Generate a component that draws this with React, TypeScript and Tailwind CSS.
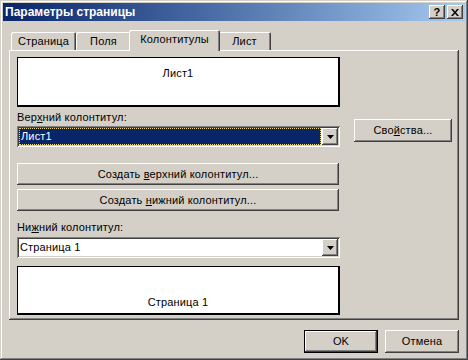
import type { ReactNode } from 'react';

const raised =
  'shadow-[inset_-1px_-1px_#404040,inset_1px_1px_#ffffff,inset_-2px_-2px_#808080,inset_2px_2px_#d4d0c8]';
const sunken =
  'shadow-[inset_1px_1px_#808080,inset_-1px_-1px_#ffffff,inset_2px_2px_#404040,inset_-2px_-2px_#d4d0c8]';

function Button({ children, className = '' }: { children: ReactNode; className?: string }) {
  return (
    <div className={`flex items-center justify-center bg-[#d4d0c8] text-black ${raised} ${className}`}>
      {children}
    </div>
  );
}

function Arrow() {
  return (
    <svg width="7" height="4" viewBox="0 0 7 4">
      <polygon points="0,0 7,0 3.5,4" fill="#000" />
    </svg>
  );
}

function Combo({ text, selected }: { text: string; selected?: boolean }) {
  return (
    <div className={`flex h-[21px] w-[323px] bg-white p-[2px] ${sunken}`}>
      <div className="flex flex-1 items-center pr-[1px]">
        {selected ? (
          <div className="flex h-full w-full items-center border border-dotted border-[#e8d890] bg-[#0a246a] pl-[1px] text-white">
            {text}
          </div>
        ) : (
          <div className="pl-[1px]">{text}</div>
        )}
      </div>
      <Button className="h-full w-[16px]">
        <Arrow />
      </Button>
    </div>
  );
}

function Tab({ label, active }: { label: string; active?: boolean }) {
  return (
    <div
      className={`flex items-center justify-center rounded-t-[2px] bg-[#d4d0c8] shadow-[inset_1px_1px_#ffffff,inset_-1px_0_#404040,inset_-2px_0_#808080] ${
        active ? 'relative z-10 -mx-[2px] -mb-[1px] h-[21px] pb-[2px]' : 'h-[18px] pt-[1px]'
      }`}
    >
      {label}
    </div>
  );
}

export default function App() {
  return (
    <div
      className="flex h-[360px] w-[468px] flex-col bg-[#d4d0c8] p-[3px] text-[11px] leading-[13px] tracking-[0.15px] text-black shadow-[inset_-1px_-1px_#404040,inset_1px_1px_#d4d0c8,inset_-2px_-2px_#808080,inset_2px_2px_#ffffff]"
      style={{ fontFamily: '"Liberation Sans", Arial, sans-serif' }}
    >
      {/* title bar */}
      <div className="flex h-[18px] items-center bg-gradient-to-r from-[#0a246a] to-[#a6caf0] pl-[2px] pr-[2px]">
        <span className="flex-1 text-[12px] font-bold tracking-normal text-white">Параметры страницы</span>
        <Button className="h-[14px] w-[16px] text-[11px] font-bold leading-none">?</Button>
        <Button className="ml-[2px] h-[14px] w-[16px]">
          <svg width="8" height="7" viewBox="0 0 8 7">
            <path d="M0 0h2l2 2.5L6 0h2L5 3.5 8 7H6L4 4.5 2 7H0l3-3.5z" fill="#000" />
          </svg>
        </Button>
      </div>

      {/* tabs */}
      <div className="mx-[6px] mt-[8px] flex h-[21px] items-end pl-[2px]">
        <div className="w-[65px]"><Tab label="Страница" /></div>
        <div className="w-[55px]"><Tab label="Поля" /></div>
        <div className="w-[87px]"><Tab label="Колонтитулы" active /></div>
        <div className="w-[53px]"><Tab label="Лист" /></div>
      </div>

      {/* tab page */}
      <div className="mx-[6px] flex h-[270px] pl-[8px] pt-[7px] shadow-[inset_-1px_-1px_#404040,inset_1px_1px_#ffffff,inset_-2px_-2px_#808080]">
        <div className="flex w-[323px] flex-col">
          <div className="flex h-[50px] justify-center border border-r-2 border-b-2 border-black bg-white pt-[9px]">
            Лист1
          </div>
          <div className="mt-[4px]">
            Вер<u>х</u>ний колонтитул:
          </div>
          <div className="mt-[2px]">
            <Combo text="Лист1" selected />
          </div>
          <Button className="mt-[16px] h-[22px] w-[322px]">
            <span>
              Создать <u>в</u>ерхний колонтитул...
            </span>
          </Button>
          <Button className="mt-[4px] h-[22px] w-[322px]">
            <span>
              Создать <u>н</u>ижний колонтитул...
            </span>
          </Button>
          <div className="mt-[10px]">
            Ни<u>ж</u>ний колонтитул:
          </div>
          <div className="mt-[3px]">
            <Combo text="Страница 1" />
          </div>
          <div className="mt-[8px] flex h-[49px] items-end justify-center border border-r-2 border-b-2 border-black bg-white pb-[4px]">
            Страница 1
          </div>
        </div>
        <div className="ml-[14px] mt-[62px]">
          <Button className="h-[23px] w-[98px]">
            <span>
              Сво<u>й</u>ства...
            </span>
          </Button>
        </div>
      </div>

      {/* dialog buttons */}
      <div className="mt-[10px] flex justify-end gap-[7px] pr-[6px]">
        <div className="border border-black">
          <Button className="h-[21px] w-[72px]">OK</Button>
        </div>
        <Button className="h-[23px] w-[74px]">Отмена</Button>
      </div>
    </div>
  );
}
